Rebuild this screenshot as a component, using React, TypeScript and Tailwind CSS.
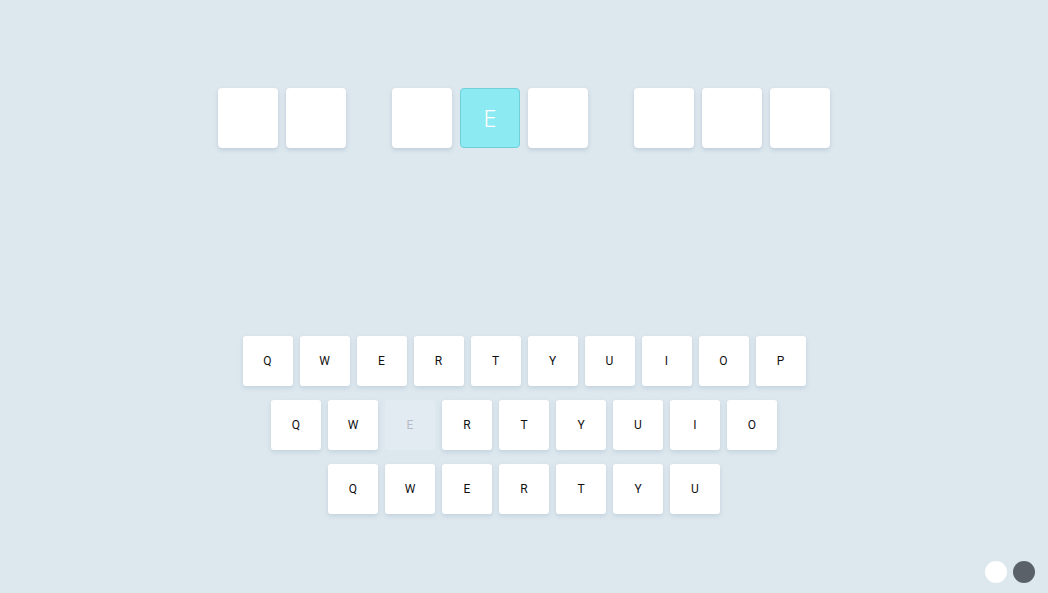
import React from "react";

const groups = [["", ""], ["", "E", ""], ["", "", ""]];
const rows = [
  ["Q", "W", "E", "R", "T", "Y", "U", "I", "O", "P"],
  ["Q", "W", "E", "R", "T", "Y", "U", "I", "O"],
  ["Q", "W", "E", "R", "T", "Y", "U"],
];

const App = () => {
  return (
    <div className="relative w-full h-[593px] bg-[#dde7ee] flex flex-col items-center pt-[88px] font-['Roboto',sans-serif]">
      {/* word tiles */}
      <div className="flex gap-[46px]">
        {groups.map((g, gi) => (
          <div key={gi} className="flex gap-2">
            {g.map((ch, i) =>
              ch ? (
                <div
                  key={i}
                  className="w-[60px] h-[60px] rounded-[4px] bg-[#8beaf2] border border-[#6fd0da] flex items-center justify-center text-white text-[24px] font-light font-['Noto_Sans',sans-serif]"
                >
                  {ch}
                </div>
              ) : (
                <div
                  key={i}
                  className="w-[60px] h-[60px] rounded-[4px] bg-white shadow-[0_2px_4px_rgba(120,150,170,0.3)]"
                />
              )
            )}
          </div>
        ))}
      </div>

      {/* keyboard */}
      <div className="flex flex-col items-center gap-[14px] mt-[188px]">
        {rows.map((r, ri) => (
          <div key={ri} className="flex gap-[7px]">
            {r.map((k, i) => {
              const off = ri === 1 && i === 2;
              return (
                <div
                  key={i}
                  className={
                    off
                      ? "w-[50px] h-[50px] rounded-[3px] bg-[#e3ebf2] flex items-center justify-center text-[12px] text-[#b3bcc4]"
                      : "w-[50px] h-[50px] rounded-[3px] bg-white shadow-[0_2px_4px_rgba(120,150,170,0.25)] flex items-center justify-center text-[12px] text-[#111]"
                  }
                >
                  {k}
                </div>
              );
            })}
          </div>
        ))}
      </div>

      {/* theme dots */}
      <div className="absolute right-[13px] bottom-[10px] flex gap-[6px]">
        <div className="w-[22px] h-[22px] rounded-full bg-white" />
        <div className="w-[22px] h-[22px] rounded-full bg-[#5b6168]" />
      </div>
    </div>
  );
};

export default App;
